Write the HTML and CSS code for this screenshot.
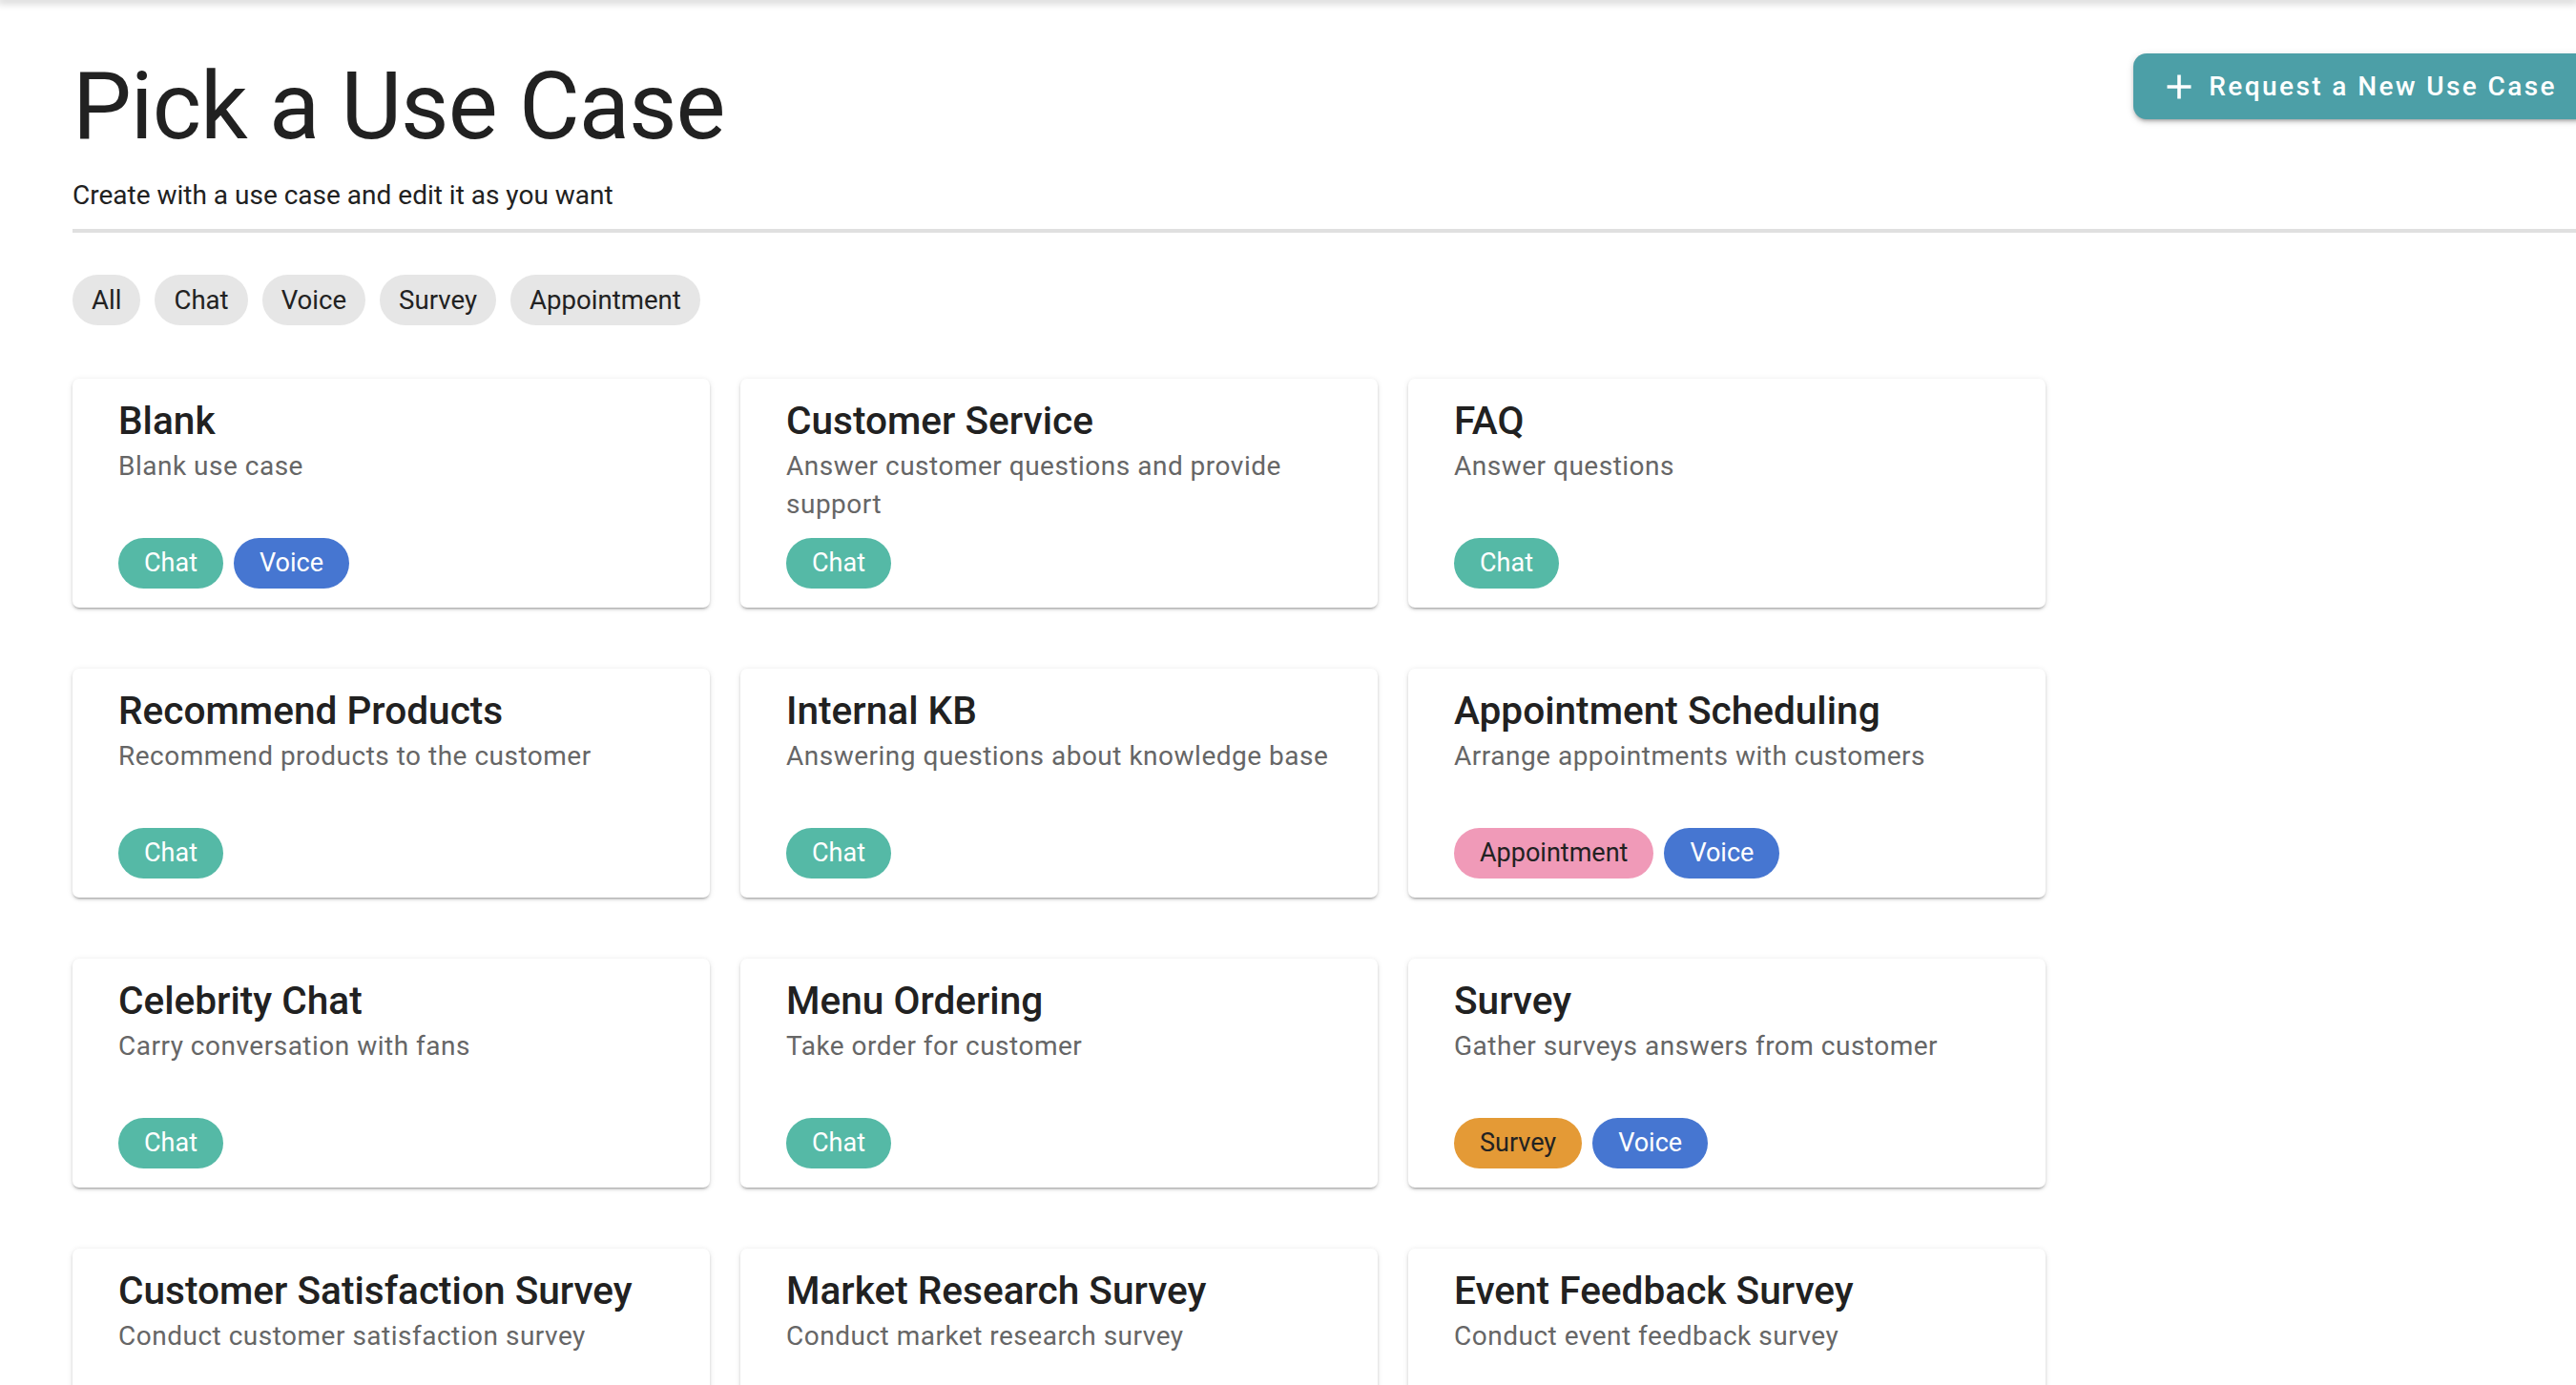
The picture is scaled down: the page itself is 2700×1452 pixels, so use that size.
FILE: index.html
```html
<!DOCTYPE html>
<html lang="en">
<head>
<meta charset="utf-8">
<title>Pick a Use Case</title>
<link rel="stylesheet" href="styles.css">
</head>
<body>
<div class="appbar-shadow"></div>
<main class="page">
  <header class="header">
    <div class="heading">
      <h1 class="title">Pick a Use Case</h1>
      <p class="subtitle">Create with a use case and edit it as you want</p>
    </div>
    <button class="request-btn" type="button">
      <svg class="plus" viewBox="0 0 28 28" width="28" height="28" aria-hidden="true">
        <path d="M14 1.5V26.5M1.5 14H26.5" stroke="#fff" stroke-width="3.6" fill="none"/>
      </svg>
      <span>Request a New Use Case</span>
    </button>
  </header>
  <hr class="divider">
  <div class="filters">
    <span class="filter">All</span>
    <span class="filter">Chat</span>
    <span class="filter">Voice</span>
    <span class="filter">Survey</span>
    <span class="filter">Appointment</span>
  </div>
  <section class="grid">
    <article class="card">
      <h2 class="card-title">Blank</h2>
      <p class="card-desc">Blank use case</p>
      <div class="tags"><span class="tag chat">Chat</span><span class="tag voice">Voice</span></div>
    </article>
    <article class="card">
      <h2 class="card-title">Customer Service</h2>
      <p class="card-desc">Answer customer questions and provide support</p>
      <div class="tags"><span class="tag chat">Chat</span></div>
    </article>
    <article class="card">
      <h2 class="card-title">FAQ</h2>
      <p class="card-desc">Answer questions</p>
      <div class="tags"><span class="tag chat">Chat</span></div>
    </article>
    <article class="card">
      <h2 class="card-title">Recommend Products</h2>
      <p class="card-desc">Recommend products to the customer</p>
      <div class="tags"><span class="tag chat">Chat</span></div>
    </article>
    <article class="card">
      <h2 class="card-title">Internal KB</h2>
      <p class="card-desc">Answering questions about knowledge base</p>
      <div class="tags"><span class="tag chat">Chat</span></div>
    </article>
    <article class="card">
      <h2 class="card-title">Appointment Scheduling</h2>
      <p class="card-desc">Arrange appointments with customers</p>
      <div class="tags"><span class="tag appointment">Appointment</span><span class="tag voice">Voice</span></div>
    </article>
    <article class="card">
      <h2 class="card-title">Celebrity Chat</h2>
      <p class="card-desc">Carry conversation with fans</p>
      <div class="tags"><span class="tag chat">Chat</span></div>
    </article>
    <article class="card">
      <h2 class="card-title">Menu Ordering</h2>
      <p class="card-desc">Take order for customer</p>
      <div class="tags"><span class="tag chat">Chat</span></div>
    </article>
    <article class="card">
      <h2 class="card-title">Survey</h2>
      <p class="card-desc">Gather surveys answers from customer</p>
      <div class="tags"><span class="tag survey">Survey</span><span class="tag voice">Voice</span></div>
    </article>
    <article class="card">
      <h2 class="card-title">Customer Satisfaction Survey</h2>
      <p class="card-desc">Conduct customer satisfaction survey</p>
      <div class="tags"><span class="tag survey">Survey</span></div>
    </article>
    <article class="card">
      <h2 class="card-title">Market Research Survey</h2>
      <p class="card-desc">Conduct market research survey</p>
      <div class="tags"><span class="tag survey">Survey</span></div>
    </article>
    <article class="card">
      <h2 class="card-title">Event Feedback Survey</h2>
      <p class="card-desc">Conduct event feedback survey</p>
      <div class="tags"><span class="tag survey">Survey</span></div>
    </article>
  </section>
</main>
</body>
</html>
```
FILE: styles.css
```css
html, body {
  margin: 0;
  padding: 0;
  background: #fff;
  overflow: hidden;
}
body {
  font-family: Roboto, "Liberation Sans", Arial, sans-serif;
  color: #212121;
}
.appbar-shadow {
  height: 0;
  box-shadow: 0 0 9px 3px rgba(0, 0, 0, 0.22);
}
.page {
  padding-left: 76px;
}
.header {
  display: flex;
  justify-content: space-between;
  align-items: flex-start;
}
.heading {
  padding-top: 55px;
}
.title {
  margin: 0;
  font-size: 98px;
  font-weight: 400;
  line-height: 114px;
  letter-spacing: -1px;
  color: #212121;
}
.subtitle {
  margin: 17px 0 0;
  font-size: 28px;
  line-height: 37px;
  color: #212121;
}
.request-btn {
  margin-top: 56px;
  margin-right: -14px;
  height: 69px;
  display: flex;
  align-items: center;
  gap: 17px;
  padding: 0 34px;
  border: none;
  border-radius: 14px;
  background: #4c9fa7;
  color: #fff;
  font-family: Roboto, "Liberation Sans", Arial, sans-serif;
  font-size: 28px;
  font-weight: 500;
  letter-spacing: 2.4px;
  box-shadow: 0 3px 3px -2px rgba(0,0,0,0.2), 0 3px 4px 0 rgba(0,0,0,0.14), 0 2px 9px 0 rgba(0,0,0,0.12);
  white-space: nowrap;
}
.plus {
  flex: none;
  display: block;
}
.divider {
  margin: 17px 0 0;
  border: none;
  height: 4px;
  background: #e0e0e0;
}
.filters {
  margin-top: 44px;
  display: flex;
  gap: 15px;
}
.filter {
  height: 53px;
  line-height: 53px;
  padding: 0 20px;
  border-radius: 27px;
  background: #e6e6e6;
  font-size: 27.6px;
  color: #222;
}
.grid {
  margin-top: 56px;
  display: grid;
  grid-template-columns: repeat(3, 668px);
  column-gap: 32px;
  row-gap: 64px;
}
.card {
  height: 240px;
  box-sizing: border-box;
  padding: 18px 48px 20px;
  display: flex;
  flex-direction: column;
  background: #fff;
  border-radius: 7px;
  box-shadow: 0 3px 2px -2px rgba(0,0,0,0.2), 0 2px 3px 0 rgba(0,0,0,0.14), 0 1px 6px 0 rgba(0,0,0,0.1);
}
.card-title {
  margin: 0;
  font-size: 40.6px;
  font-weight: 500;
  line-height: 53px;
  color: #212121;
}
.card-desc {
  margin: 1px 0 0;
  font-size: 28px;
  line-height: 40px;
  letter-spacing: 0.5px;
  color: #666;
}
.tags {
  margin-top: auto;
  display: flex;
  gap: 11px;
}
.tag {
  height: 53px;
  line-height: 53px;
  padding: 0 27px;
  border-radius: 27px;
  font-size: 27px;
}
.tag.chat { background: #55b9a6; color: #fff; }
.tag.voice { background: #4676d1; color: #fff; }
.tag.appointment { background: #f09ab8; color: #222; }
.tag.survey { background: #e49a36; color: #222; }
```
